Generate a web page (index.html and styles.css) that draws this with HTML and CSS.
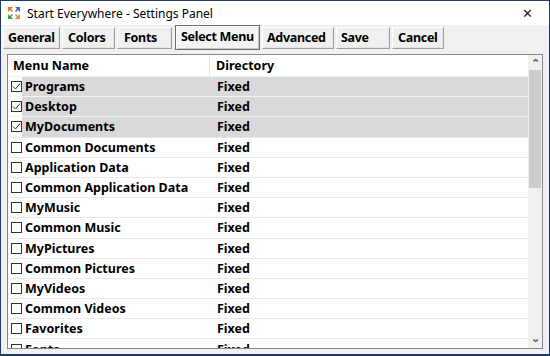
FILE: index.html
```html
<!DOCTYPE html>
<html lang="en">
<head>
    <meta charset="UTF-8">
    <title>Start Everywhere - Settings Panel</title>
    <link rel="stylesheet" href="styles.css">
</head>
<body>
    <div class="window">
        <div class="titlebar">
            <svg class="app-icon" width="14" height="14" viewBox="0 0 14 14">
                <rect x="0" y="0" width="14" height="14" fill="#fff"/>
                <path d="M1 1h5l-2 2 2 2-1 1-2-2-2 2z" fill="#e0752a"/>
                <path d="M13 1v5l-2-2-2 2-1-1 2-2-2-2z" fill="#2f6fc4"/>
                <path d="M1 13v-5l2 2 2-2 1 1-2 2 2 2z" fill="#3f9a3a"/>
                <path d="M13 13h-5l2-2-2-2 1-1 2 2 2-2z" fill="#d8902a"/>
            </svg>
            <span class="title">Start Everywhere - Settings Panel</span>
            <span class="close">&#x2715;</span>
        </div>

        <div class="toolbar">
            <button class="tab">General</button>
            <button class="tab">Colors</button>
            <button class="tab">Fonts</button>
            <button class="tab active">Select Menu</button>
            <button class="tab">Advanced</button>
            <button class="tab">Save</button>
            <button class="tab">Cancel</button>
        </div>

        <div class="listbox">
            <div class="list-content">
                <div class="list-header">
                    <div class="col-name">Menu Name</div>
                    <div class="col-dir">Directory</div>
                </div>
                <div id="rows"></div>
            </div>
            <div class="scrollbar">
                <div class="arrow">&#x2303;</div>
                <div class="track"><div class="thumb"></div></div>
                <div class="arrow down">&#x2304;</div>
            </div>
        </div>
    </div>

    <script>
        const items = [
            ['Programs', true], ['Desktop', true], ['MyDocuments', true],
            ['Common Documents', false], ['Application Data', false],
            ['Common Application Data', false], ['MyMusic', false],
            ['Common Music', false], ['MyPictures', false],
            ['Common Pictures', false], ['MyVideos', false],
            ['Common Videos', false], ['Favorites', false], ['Fonts', false]
        ];

        const check = '<svg width="9" height="9" viewBox="0 0 9 9"><path d="M1 4.5l2.5 2.5 4.5-5.5" fill="none" stroke="#333" stroke-width="1"/></svg>';

        let html = '';
        for (const [name, on] of items) {
            html += `
                <div class="row ${on ? 'selected' : ''}">
                    <div class="col-name">
                        <span class="checkbox">${on ? check : ''}</span>
                        <span class="cell">${name}</span>
                    </div>
                    <div class="col-dir"><span class="cell">Fixed</span></div>
                </div>`;
        }
        document.getElementById('rows').innerHTML = html;
    </script>
</body>
</html>
```

FILE: styles.css
```css
* {
    margin: 0;
    padding: 0;
    box-sizing: border-box;
}

body {
    font-family: 'Noto Sans', 'Open Sans', sans-serif;
    background: #f0f0f0;
    color: #000;
    width: 550px;
    height: 356px;
    overflow: hidden;
}

.window {
    width: 550px;
    height: 356px;
    border: 1px solid #1d3d63;
    border-bottom-width: 2px;
    background: #f0f0f0;
    display: flex;
    flex-direction: column;
}

.titlebar {
    height: 24px;
    background: #fff;
    display: flex;
    align-items: center;
    padding-left: 6px;
}

.app-icon {
    margin-right: 6px;
}

.title {
    font-size: 12px;
    flex: 1;
}

.close {
    font-size: 13px;
    width: 44px;
    text-align: center;
    color: #222;
}

.toolbar {
    display: flex;
    align-items: flex-start;
    gap: 2px;
    padding: 2px 0 0 2px;
    height: 27px;
}

.tab {
    font-family: inherit;
    font-weight: bold;
    font-size: 12.5px;
    letter-spacing: -0.3px;
    height: 22px;
    white-space: nowrap;
    overflow: hidden;
    background: #f0f0f0;
    color: #000;
    border: 1px solid;
    border-color: #fff #a0a0a0 #a0a0a0 #fff;
    box-shadow: inset -1px -1px 0 #e3e3e3;
    text-align: left;
    padding: 0 0 2px 4px;
}

.tab:nth-child(1) { width: 57px; }
.tab:nth-child(2) { width: 53px; padding-left: 5px; }
.tab:nth-child(3) { width: 55px; margin-right: 1px; padding-left: 6px; }
.tab:nth-child(4) { width: 85px; }
.tab:nth-child(5) { width: 72px; }
.tab:nth-child(6) { width: 54px; }
.tab:nth-child(7) { width: 52px; padding-left: 5px; }

.tab.active {
    height: 25px;
    margin-top: -2px;
    border: 1px solid #707070;
    box-shadow: inset 1px 1px 0 #fff, inset -1px -1px 0 #c8c8c8;
    background: #f4f4f4;
    padding-left: 5px;
}

.listbox {
    margin: 2px 0 0 6px;
    width: 536px;
    height: 295px;
    border: 1px solid #828790;
    background: #fff;
    display: flex;
}

.list-content {
    flex: 1;
    overflow: hidden;
}

.list-header,
.row {
    display: grid;
    grid-template-columns: 202px 1fr;
    font-weight: bold;
    font-size: 12.5px;
}

.list-header {
    height: 21px;
    align-items: center;
}

.list-header .col-name {
    padding-left: 5px;
    border-right: 1px solid #e5e5e5;
    height: 100%;
    display: flex;
    align-items: center;
}

.list-header .col-dir {
    padding-left: 6px;
}

.row {
    height: 20.2px;
    border-top: 1px solid #e8e8e8;
}

.row .col-name {
    display: flex;
    align-items: center;
    padding-left: 3px;
}

.row .col-dir {
    display: flex;
    align-items: center;
    padding-left: 7px;
}

.row.selected {
    border-top-color: #f4f4f4;
}

.row.selected .cell {
    align-self: stretch;
    display: flex;
    align-items: center;
}

.row.selected .col-name .cell {
    flex: 1;
    background: #d9d9d9;
    padding-left: 3px;
}

.row.selected .col-dir {
    background: #d9d9d9;
}

.row .col-name .cell {
    padding-left: 3px;
}

.checkbox {
    width: 11px;
    height: 11px;
    border: 1px solid #333;
    background: #fff;
    display: flex;
    align-items: center;
    justify-content: center;
}

.scrollbar {
    width: 14px;
    background: #f0f0f0;
    display: flex;
    flex-direction: column;
}

.arrow {
    height: 15px;
    font-size: 11px;
    line-height: 15px;
    text-align: center;
    color: #606060;
    font-weight: bold;
}

.arrow.down {
    line-height: 10px;
}

.track {
    flex: 1;
}

.thumb {
    margin: 0 1px;
    height: 118px;
    background: #cdcdcd;
}
```
